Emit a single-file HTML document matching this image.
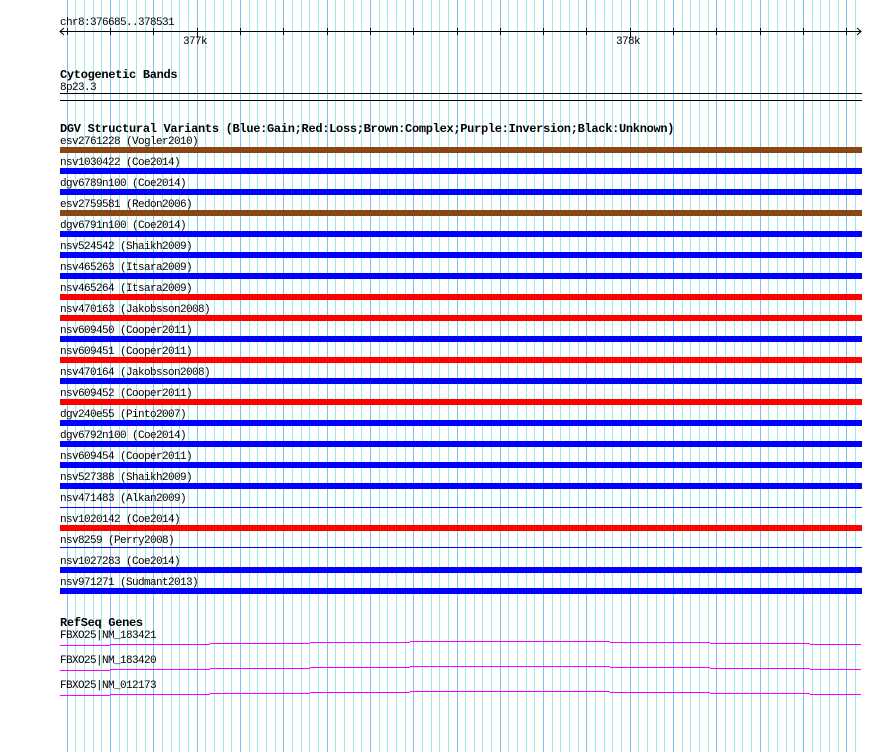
<!DOCTYPE html>
<html><head><meta charset="utf-8"><style>
html,body{margin:0;padding:0;background:#fff;}
svg{display:block;}
text{font-family:"Liberation Mono","DejaVu Sans Mono",monospace;font-size:11px;letter-spacing:-0.6px;fill:#000;}
.b{font-weight:bold;font-size:12px;letter-spacing:-0.3px;}
</style></head><body>
<svg id="s" width="890" height="752" xmlns="http://www.w3.org/2000/svg" shape-rendering="crispEdges">
<g id="grid"></g>
<text x="60" y="25">chr8:376685..378531</text>
<line x1="60" y1="31.5" x2="861" y2="31.5" stroke="#000"/>
<path d="M64 28 L60 31.5 L64 35 M857 28 L861 31.5 L857 35" stroke="#000" fill="none" shape-rendering="auto"/>
<g id="ticks"></g>
<text x="183" y="44">377k</text>
<text x="616" y="44">378k</text>
<text class="b" x="60" y="78">Cytogenetic Bands</text>
<text x="60" y="90">8p23.3</text>
<rect x="60" y="93" width="802" height="1" fill="#000"/>
<rect x="60" y="100" width="802" height="1" fill="#000"/>
<text class="b" x="60" y="132">DGV Structural Variants (Blue:Gain;Red:Loss;Brown:Complex;Purple:Inversion;Black:Unknown)</text>
<text x="60" y="144">esv2761228 (Vogler2010)</text><rect x="60" y="147" width="802" height="6" fill="#8b4513"/>
<text x="60" y="165">nsv1030422 (Coe2014)</text><rect x="60" y="168" width="802" height="6" fill="#0000ff"/>
<text x="60" y="186">dgv6789n100 (Coe2014)</text><rect x="60" y="189" width="802" height="6" fill="#0000ff"/>
<text x="60" y="207">esv2759581 (Redon2006)</text><rect x="60" y="210" width="802" height="6" fill="#8b4513"/>
<text x="60" y="228">dgv6791n100 (Coe2014)</text><rect x="60" y="231" width="802" height="6" fill="#0000ff"/>
<text x="60" y="249">nsv524542 (Shaikh2009)</text><rect x="60" y="252" width="802" height="6" fill="#0000ff"/>
<text x="60" y="270">nsv465263 (Itsara2009)</text><rect x="60" y="273" width="802" height="6" fill="#0000ff"/>
<text x="60" y="291">nsv465264 (Itsara2009)</text><rect x="60" y="294" width="802" height="6" fill="#ff0000"/>
<text x="60" y="312">nsv470163 (Jakobsson2008)</text><rect x="60" y="315" width="802" height="6" fill="#ff0000"/>
<text x="60" y="333">nsv609450 (Cooper2011)</text><rect x="60" y="336" width="802" height="6" fill="#0000ff"/>
<text x="60" y="354">nsv609451 (Cooper2011)</text><rect x="60" y="357" width="802" height="6" fill="#ff0000"/>
<text x="60" y="375">nsv470164 (Jakobsson2008)</text><rect x="60" y="378" width="802" height="6" fill="#0000ff"/>
<text x="60" y="396">nsv609452 (Cooper2011)</text><rect x="60" y="399" width="802" height="6" fill="#ff0000"/>
<text x="60" y="417">dgv240e55 (Pinto2007)</text><rect x="60" y="420" width="802" height="6" fill="#0000ff"/>
<text x="60" y="438">dgv6792n100 (Coe2014)</text><rect x="60" y="441" width="802" height="6" fill="#0000ff"/>
<text x="60" y="459">nsv609454 (Cooper2011)</text><rect x="60" y="462" width="802" height="6" fill="#0000ff"/>
<text x="60" y="480">nsv527388 (Shaikh2009)</text><rect x="60" y="483" width="802" height="6" fill="#0000ff"/>
<text x="60" y="501">nsv471483 (Alkan2009)</text><rect x="60" y="507" width="802" height="1" fill="#0000ff"/>
<text x="60" y="522">nsv1020142 (Coe2014)</text><rect x="60" y="525" width="802" height="6" fill="#ff0000"/>
<text x="60" y="543">nsv8259 (Perry2008)</text><rect x="60" y="547" width="802" height="1" fill="#0000ff"/>
<text x="60" y="564">nsv1027283 (Coe2014)</text><rect x="60" y="567" width="802" height="6" fill="#0000ff"/>
<text x="60" y="585">nsv971271 (Sudmant2013)</text><rect x="60" y="588" width="802" height="6" fill="#0000ff"/>
<text class="b" x="60" y="626">RefSeq Genes</text>
<text x="60" y="638">FBXO25|NM_183421</text>
<text x="60" y="663">FBXO25|NM_183420</text>
<text x="60" y="688">FBXO25|NM_012173</text>
<g id="genes" fill="#ff00ff"></g>
</svg>
<script>
var NS="http://www.w3.org/2000/svg";
function el(p,t,a){var e=document.createElementNS(NS,t);for(var k in a)e.setAttribute(k,a[k]);p.appendChild(e);return e;}
var g=document.getElementById('grid');
for(var k=0;k<93;k++){var x=Math.round(66.8+k*8.66);if(x>860)break;
 el(g,'rect',{x:x,y:0,width:1,height:752,fill:(k%5==0)?'#7cc2ee':'#9ceaea'});}
var t=document.getElementById('ticks');
for(var k=0;k<19;k++){var x=Math.round(66.8+k*43.3);if(x>860)break;
 var major=(x==197||x==630);
 el(t,'rect',{x:x,y:28,width:1,height:major?10:7,fill:'#000'});}
var gn=document.getElementById('genes');
var seg=[[60,110,0],[110,210,-1],[210,310,-2],[310,410,-3],[410,610,-4],[610,710,-3],[710,810,-2],[810,861,-1]];
[645,670,695].forEach(function(b){seg.forEach(function(s){el(gn,'rect',{x:s[0],y:b+s[2],width:s[1]-s[0],height:1});});});
</script>
</body></html>
